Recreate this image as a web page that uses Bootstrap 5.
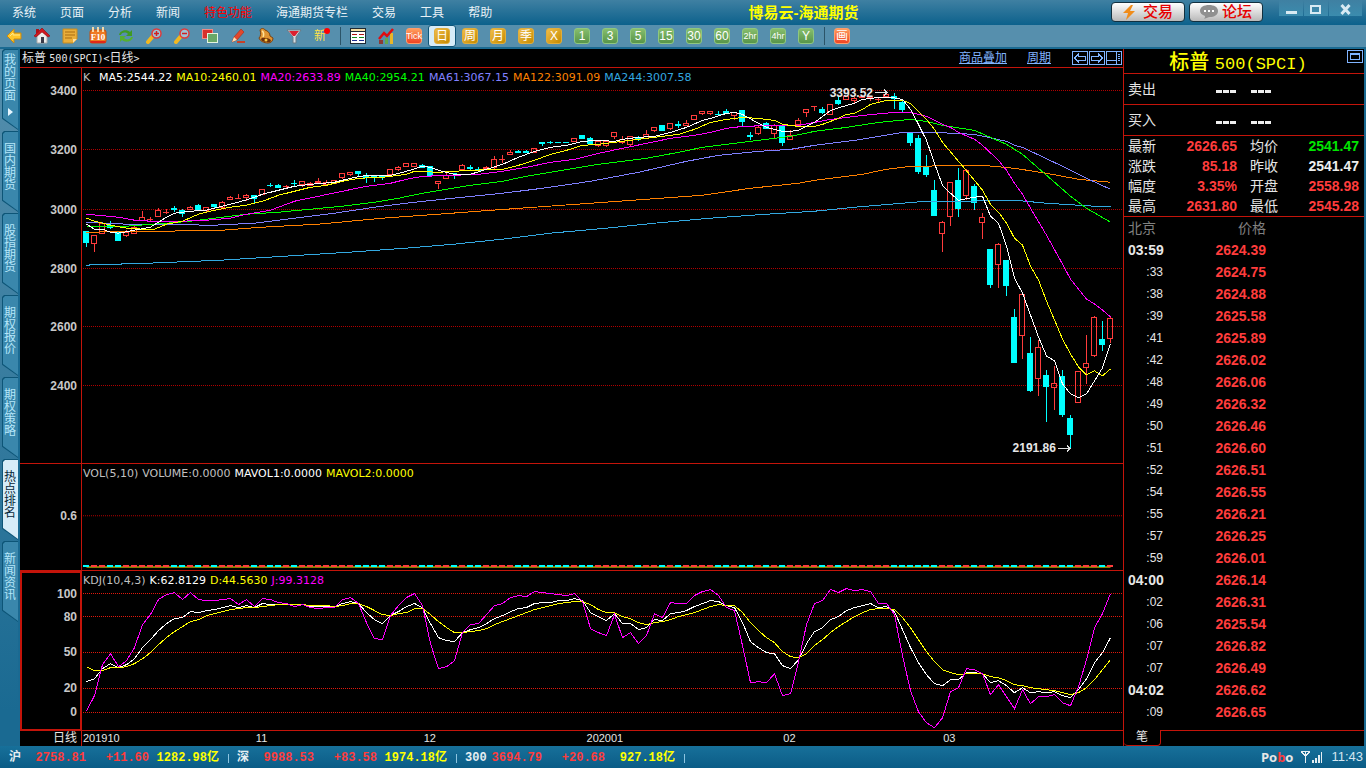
<!DOCTYPE html>
<html lang="zh-CN" data-bs-theme="dark">
<head>
<meta charset="utf-8">
<meta name="viewport" content="width=device-width, initial-scale=1">
<title>博易云-海通期货</title>
<link rel="stylesheet" href="https://cdn.jsdelivr.net/npm/bootstrap@5.3.0/dist/css/bootstrap.min.css">
<style>
:root{--rule:#c4140a;--frame:#1a6a92;--up:#ff3c3c;--down:#00ffff;--ink:#e6e6e6}
body{font-family:"Liberation Sans","Noto Sans CJK SC",sans-serif;font-size:12px;line-height:16px;color:var(--ink);background:#000}
button{border:0;padding:0;background:none;color:inherit;font:inherit}
.app-head{height:25px;background:linear-gradient(#3f80a2,#0c618c)}
.menu-link{padding:0 12px;line-height:26px;color:#e8f1f6;text-decoration:none;white-space:nowrap}
.menu-link.hot{color:#f00}
.app-title{font-size:15px;line-height:25px;color:#ff0;font-weight:700;margin:0;padding-right:8px}
.head-btn{width:74px;height:20px;border:1px solid #12303f;border-radius:4px;background:linear-gradient(#fff,#b9b9b9);color:#e60000;font-size:15px;line-height:18px;font-weight:500}
.win-btn{width:24px;height:16px;background:linear-gradient(#3f80a2,#3b8cae);color:#d8eaf3}
.win-btn.wide{width:33px}
.tool-bar{height:22px;background:#568fad}
.tool{width:28px;height:22px;display:flex;align-items:center;justify-content:center}
.tool.on{background:#d6ecf8;border:1px solid #0f5578;border-radius:3px}
.tool-gap{width:8px;display:flex;justify-content:center;align-items:center}
.tool-gap::before{content:"";width:1px;height:18px;background:#2b5468}
.chip{width:16px;height:16px;border-radius:3px;display:flex;align-items:center;justify-content:center;color:#fff;font-size:12px;line-height:16px;border:1px solid #e0ad3c;background:linear-gradient(135deg,#f0bd48,#c58a00)}
.chip.green{border-color:#8fc77f;background:linear-gradient(#86bd6c,#57954a)}
.chip.red{border-color:#ff9c6a;background:linear-gradient(#ff9d5c,#ee4424)}
.chip.slim{font-size:9px}
.chip.cjk{font-size:12px}
.work{border-top:2px solid var(--frame);border-right:2px solid var(--frame);flex:1 1 auto;min-height:0}
.side{width:20px;padding-left:2px;background:linear-gradient(#568fad,#1a6a92 95%);border-right:2px solid var(--frame)}
.side-tab{--cut:polygon(2px 0,100% 0,100% 100%,0 86%,0 2px);position:relative;width:16px;height:81px;margin-bottom:1px;background:#0d5577;clip-path:var(--cut);display:flex;flex-direction:column;align-items:center;justify-content:center;gap:6px;padding-bottom:10px;color:#b5e6fa;isolation:isolate}
.side-tab::before{content:"";position:absolute;inset:1px 0 1px 1px;background:#3a87ac;clip-path:var(--cut);z-index:-1}
.side-tab.on{color:#06283a}
.side-tab.on::before{background:#d6ecf8}
.side-tab span{width:12px;line-height:12px;word-break:break-all}
.chart-head{height:19px;border-bottom:1px solid var(--rule);padding:0 1px 0 2px}
.chart-head a{color:#80b4ff;margin-right:20px;line-height:18px}
.mono-s{font-family:"DejaVu Sans Mono",monospace;font-size:10px}
.nav-box{color:#80b4ff;width:16px;height:15px;margin-left:1px;display:flex}
.chart-col{border-right:1px solid var(--rule)}
.pane{display:flex;min-height:0;border-bottom:1px solid var(--rule)}
.pane-price{flex:397 1 0}
.pane-vol{flex:106 1 0}
.pane-kdj{flex:160 1 0}
.axis{position:relative;width:62px;border-right:1px solid var(--rule);flex:none}
.pane-kdj .axis{border:2px solid var(--rule);border-bottom-width:1px}
.axis span{position:absolute;right:4px;transform:translateY(-50%);font-weight:700;font-size:12px;color:#c8c8c8}
.pane-kdj .axis span{right:3px}
.plot{position:relative;min-width:0;flex:1}
.plot svg.draw{position:absolute;inset:0;width:100%;height:100%;display:block}
.draw *{vector-effect:non-scaling-stroke;shape-rendering:crispEdges}
.legend-row{position:relative;z-index:1;display:flex;gap:4px;padding:2px 0 0 1px;font-family:"DejaVu Sans",sans-serif;font-size:11px;line-height:16px;white-space:nowrap;color:#c0c0c0}
.legend-row .first-k{width:12px}
.mark-tag{position:absolute;display:flex;align-items:center;gap:2px;font-weight:700;transform:translateY(-50%);line-height:14px;color:#e6e6e6}
.dates{height:15px;display:flex;line-height:15px}
.dates .unit{width:62px;flex:none;text-align:right;padding-right:4px;border-right:1px solid var(--rule)}
.date-track{display:grid;flex:1;grid-template-columns:173fr 168fr 163fr 197fr 160fr 180fr;font-size:11px;padding-left:1px}
.quote{width:240px;flex:none}
.quote-head{height:25px;border-bottom:1px solid var(--rule);position:relative}
.quote-head h2{color:#ff0;font-size:20px;line-height:26px;margin:0;font-weight:500;padding-right:12px}
.quote-head h2 span{font-family:"Liberation Mono",monospace;font-size:17px;font-weight:400}
.quote-head button{position:absolute;top:1px;right:1px;color:#80b4ff;display:flex}
.side-row{height:31px;border-bottom:1px solid var(--rule);font-size:14px;padding-left:4px}
.side-row b{display:flex;gap:15px;padding-left:60px}
.dash3{display:flex;gap:1px;font-size:16px}
.dash3 i{width:6px;height:3px;background:#eee;margin-top:5px}
.facts{height:81px;border-bottom:1px solid var(--rule);display:grid;grid-template-columns:34px 75px 34px 88px;column-gap:0;grid-auto-rows:20px;line-height:20px;font-size:14px;padding:0 4px;margin:0}
.facts dt{font-weight:400}
.facts dt:nth-of-type(even){padding-left:13px;width:48px}
.facts dd{margin:0;text-align:right;font-weight:700}
.up{color:var(--up)}.even{color:#eee}.low{color:#00e600}
.ticks{width:142px;font-size:14px;line-height:22px;border-collapse:collapse}
.ticks th,.ticks td{padding:0;height:22px}
.ticks thead th{color:#808080;font-weight:400}
.ticks th:first-child{padding-left:4px;text-align:left;width:42px}
.ticks td,.ticks th:last-child{text-align:right}
.ticks tbody th.sec{font-weight:400;font-size:12px;text-align:right;padding-right:3px}
.ticks td{color:var(--up);font-weight:700}
.foot-tabs{height:16px}
.foot-tabs button{width:37px;border:1px solid var(--rule);border-width:0 1px 1px 0;border-radius:0 0 4px 4px;font-size:12px;line-height:15px}
.foot-tabs div{border-top:1px solid var(--rule)}
.status{height:22px;background:linear-gradient(#17709a,#0b5c86);line-height:24px;padding-left:9px;padding-right:3px}
.idx{display:grid;grid-template-columns:26px 51px 63px 70px 18px;font-family:"Liberation Mono","Noto Sans CJK SC",monospace;font-weight:700;text-align:right;white-space:nowrap}
.idx :first-child{text-align:left;color:#e6eef2}
.idx em{font-style:normal;color:#ff0}
.idx u{text-decoration:none;display:flex;justify-content:center;align-items:center}
.idx u::before{content:"";width:1px;height:9px;background:#8cc4e0}
.brand{font-family:"Open Sans",sans-serif;font-size:13px;font-weight:700}
.clock{font-size:13px;color:#d4e6f0}
</style>
</head>
<body>
<div class="d-flex flex-column vh-100 overflow-hidden">
<header class="app-head d-flex">
  <nav class="d-flex">
    <a class="menu-link" href="#">系统</a><a class="menu-link" href="#">页面</a><a class="menu-link" href="#">分析</a><a class="menu-link" href="#">新闻</a><a class="menu-link hot" href="#">特色功能</a><a class="menu-link" href="#">海通期货专栏</a><a class="menu-link" href="#">交易</a><a class="menu-link" href="#">工具</a><a class="menu-link" href="#">帮助</a>
  </nav>
  <h1 class="app-title flex-grow-1 text-center">博易云-海通期货</h1>
  <div class="d-flex gap-1 align-items-start" style="padding-top:2px">
    <button class="head-btn d-flex align-items-center justify-content-center gap-2"><svg width="12" height="15" viewBox="0 0 12 15"><path d="M8 0 0 8h5l-2 7 9-9H7l3-6z" fill="#f08c1a"/></svg>交易</button>
    <button class="head-btn d-flex align-items-center justify-content-center gap-1"><svg width="18" height="14" viewBox="0 0 18 14"><path d="M9 0c5 0 9 2 9 6s-4 6-8 6c-2 0-3 1-6 2 1-1 1-2 1-3C2 10 0 8 0 6c0-4 4-6 9-6z" fill="#909090"/><path d="M4 5h2v2H4zM8 5h2v2H8zM12 5h2v2h-2z" fill="#fff"/></svg>论坛</button>
  </div>
  <div class="d-flex ms-3 pe-1 align-items-start" style="gap:1px">
    <button class="win-btn" aria-label="最小化"><svg width="11" height="14"><path d="M0 9h11v3H0z" fill="currentColor"/></svg></button>
    <button class="win-btn" aria-label="最大化"><svg width="12" height="14"><path d="M1 4h9v7H1z" fill="none" stroke="currentColor" stroke-width="2"/></svg></button>
    <button class="win-btn wide" aria-label="关闭"><svg width="12" height="14"><path d="M1.500 3 9.500 12M9.500 3 1.500 12" fill="none" stroke="currentColor" stroke-width="3"/></svg></button>
  </div>
</header>

<div class="tool-bar d-flex" role="toolbar">
  <button class="tool" aria-label="后退"><svg width="16" height="16"><path d="M1 8l7-7v4h7v6H8v4z" fill="#ffc62a" stroke="#c98a10"/><path d="M4 8l3-3v2h7" fill="none" stroke="#ffe88a"/></svg></button>
  <button class="tool" aria-label="主页"><svg width="16" height="16"><path d="M3 8v7h10V8L8 3z" fill="#eee" stroke="#aaa"/><path d="M0 8 8 0l8 8-2 1-6-5-6 5z" fill="#d01820" stroke="#8c0c12" stroke-width=".6"/><path d="M2 1h3v3L2 6z" fill="#b01018"/><path d="M7 9h3v6H7z" fill="#3a3a48"/></svg></button>
  <button class="tool" aria-label="便笺"><svg width="16" height="16"><path d="M1 1h14v10l-4 4H1z" fill="#eaae3a" stroke="#c58a20"/><path d="M3 4h10M3 7h10M3 10h7" stroke="#a96c10"/><path d="M15 11h-4v4z" fill="#ffe0a0"/></svg></button>
  <button class="tool" aria-label="F10"><svg width="18" height="18"><rect x="1" y="3" width="16" height="13" rx="2" fill="#ef7a22" stroke="#c4500e"/><path d="M4 0v5M9 0v5M14 0v5" stroke="#f6d9a8" stroke-width="2"/><path d="M1.500 15h15" stroke="#e02818" stroke-width="2"/><text x="9" y="13" text-anchor="middle" font-family="Liberation Serif" font-weight="700" font-size="9" fill="#fff">F10</text></svg></button>
  <button class="tool" aria-label="刷新"><svg width="16" height="16"><path d="M1 7c1-5 8-6 11-3l2-2v6H8l2-2C8 4 4 4 3 7z" fill="#3f9a22"/><path d="M15 9c-1 5-8 6-11 3l-2 2V8h6l-2 2c2 2 6 2 7-1z" fill="#55b030"/></svg></button>
  <button class="tool" aria-label="放大"><svg width="16" height="16"><path d="M7 8 2 14" stroke="#f2b820" stroke-width="4" stroke-linecap="round"/><circle cx="10.500" cy="5.500" r="4.500" fill="#9fc2d4" stroke="#e03a3a" stroke-width="1.500"/><path d="M8 5.500h5M10.500 3v5" stroke="#d02020" stroke-width="1.500"/></svg></button>
  <button class="tool" aria-label="缩小"><svg width="16" height="16"><path d="M7 8 2 14" stroke="#f2b820" stroke-width="4" stroke-linecap="round"/><circle cx="10.500" cy="5.500" r="4.500" fill="#9fc2d4" stroke="#e03a3a" stroke-width="1.500"/><path d="M8 5.500h5" stroke="#d02020" stroke-width="1.500"/></svg></button>
  <button class="tool" aria-label="叠加"><svg width="16" height="16"><rect x=".5" y="1.500" width="10" height="9" fill="#d8302c" stroke="#f08a84"/><rect x="5.500" y="5.500" width="10" height="9" fill="#6aa868" stroke="#e4f4e0"/></svg></button>
  <button class="tool" aria-label="画笔"><svg width="16" height="16"><path d="M2 14 4 9l7-8 3 3-7 8z" fill="#e2482c" stroke="#a82c18" stroke-width=".6"/><path d="M2 14l2-5 3 3z" fill="#ffe0b0"/><path d="M7 14h8" stroke="#c84028" stroke-width="2"/></svg></button>
  <button class="tool" aria-label="预警"><svg width="16" height="16"><path d="M2 2c1-2 4-2 5 0 3 1 5 3 5 6l3 2c0 3-2 5-5 5-4 0-8-2-9-5 2-2 2-5 1-8z" fill="#e09432" stroke="#7c4210"/><ellipse cx="8" cy="12" rx="5" ry="2" fill="#6e3108" transform="rotate(12 8 12)"/><circle cx="8" cy="12" r="1.500" fill="#ffce4a"/><path d="M4 3c2 1 2 4 1 6" stroke="#ffe29a" stroke-width="1.500" fill="none"/></svg></button>
  <button class="tool" aria-label="筛选"><svg width="16" height="16"><path d="M1 2h14L10 9v6H7V9z" fill="#d4dde2" stroke="#6a7a84"/><path d="M3 3h10l-4 5H7z" fill="#dc2030"/></svg></button>
  <button class="tool" aria-label="新功能"><svg width="18" height="18"><text x="1" y="13" font-family="Noto Sans CJK SC" font-size="12" fill="#ffe24a">新</text><circle cx="14" cy="4" r="3" fill="#f00"/></svg></button>
  <span class="tool-gap"></span>
  <button class="tool" aria-label="报价表"><svg width="16" height="16" shape-rendering="crispEdges"><path d="M0 0h16v16H0z" fill="#1e2a34"/><path d="M1 4h14v11H1z" fill="#fff"/><path d="M1 1h14v2H1z" fill="#f5dca0"/><path d="M2 6h5v1H2zM9 6h5v1H9z" fill="#b01010"/><path d="M2 9h5v1H2zM9 9h5v1H9z" fill="#10891c"/><path d="M2 12h5v1H2zM9 12h5v1H9z" fill="#1c2c90"/></svg></button>
  <button class="tool" aria-label="走势图"><svg width="16" height="16"><path d="M1 12h4v4H1zM12 5h3v11h-3z" fill="#e8b62a"/><path d="M1 12h4v4H1z" fill="#8c3a34"/><path d="M7 10h3v6H7z" fill="#62a84c"/><path d="M1 11 6 5l3 3 6-7" fill="none" stroke="#e00c10" stroke-width="2.500"/></svg></button>
  <button class="tool"><span class="chip red slim">Tick</span></button>
  <button class="tool on"><span class="chip cjk">日</span></button>
  <button class="tool"><span class="chip cjk">周</span></button>
  <button class="tool"><span class="chip cjk">月</span></button>
  <button class="tool"><span class="chip cjk">季</span></button>
  <button class="tool"><span class="chip">X</span></button>
  <button class="tool"><span class="chip green">1</span></button>
  <button class="tool"><span class="chip green">3</span></button>
  <button class="tool"><span class="chip green">5</span></button>
  <button class="tool"><span class="chip green">15</span></button>
  <button class="tool"><span class="chip green">30</span></button>
  <button class="tool"><span class="chip green">60</span></button>
  <button class="tool"><span class="chip green slim">2hr</span></button>
  <button class="tool"><span class="chip green slim">4hr</span></button>
  <button class="tool"><span class="chip green">Y</span></button>
  <span class="tool-gap"></span>
  <button class="tool"><span class="chip red cjk">画</span></button>
</div>

<main class="work d-flex">
  <div class="side">
    <button class="side-tab"><span>我的页面</span><svg width="5" height="8"><path d="M0 0l5 4-5 4z" fill="#e6f6ff"/></svg></button>
    <button class="side-tab"><span>国内期货</span></button>
    <button class="side-tab"><span>股指期货</span></button>
    <button class="side-tab"><span>期权报价</span></button>
    <button class="side-tab"><span>期权策略</span></button>
    <button class="side-tab on"><span>热点排名</span></button>
    <button class="side-tab"><span>新闻资讯</span></button>
  </div>

  <section class="chart-col d-flex flex-column flex-grow-1">
    <div class="chart-head d-flex align-items-center">
      <span class="me-auto">标普 <span class="mono-s">500(SPCI)&lt;</span>日线<span class="mono-s">&gt;</span></span>
      <a href="#">商品叠加</a><a href="#">周期</a>
      <button class="nav-box" aria-label="上一个"><svg width="16" height="15" fill="none" stroke="currentColor" shape-rendering="crispEdges"><path d="M.5.500h15v13H.5z"/><path d="M2.500 7l4-4v2h7v4h-7v2z"/></svg></button>
      <button class="nav-box" aria-label="下一个"><svg width="16" height="15" fill="none" stroke="currentColor" shape-rendering="crispEdges"><path d="M.5.500h15v13H.5z"/><path d="M13.500 7l-4-4v2h-7v4h7v2z"/></svg></button>
      <button class="nav-box" aria-label="布局"><svg width="16" height="15" fill="none" stroke="currentColor" shape-rendering="crispEdges"><path d="M.5.500h15v13H.5zM10.500 0v14M0 9.500h10M12 3.500h2M12 5.500h2M12 7.500h2M12 9.500h2"/></svg></button>
    </div>
    <div class="pane pane-price">
      <div class="axis" id="axPrice"></div>
      <div class="plot">
        <svg class="draw" id="plPrice" viewBox="82 68 1041 396" preserveAspectRatio="none"></svg>
        <div class="legend-row"><span class="first-k">K</span><span style="color:#fff">MA5:2544.22</span><span style="color:#ff0">MA10:2460.01</span><span style="color:#f0f">MA20:2633.89</span><span style="color:#0f0">MA40:2954.21</span><span style="color:#8080ff">MA61:3067.15</span><span style="color:#ff8000">MA122:3091.09</span><span style="color:#33a8e0">MA244:3007.58</span></div>
      </div>
    </div>
    <div class="pane pane-vol">
      <div class="axis" id="axVol"></div>
      <div class="plot">
        <svg class="draw" id="plVol" viewBox="82 465 1041 105" preserveAspectRatio="none"></svg>
        <div class="legend-row"><span>VOL(5,10)</span><span>VOLUME:0.0000</span><span style="color:#fff">MAVOL1:0.0000</span><span style="color:#ff0">MAVOL2:0.0000</span></div>
      </div>
    </div>
    <div class="pane pane-kdj">
      <div class="axis" id="axKdj"></div>
      <div class="plot">
        <svg class="draw" id="plKdj" viewBox="82 571 1041 159" preserveAspectRatio="none"></svg>
        <div class="legend-row"><span>KDJ(10,4,3)</span><span style="color:#fff">K:62.8129</span><span style="color:#ff0">D:44.5630</span><span style="color:#f0f">J:99.3128</span></div>
      </div>
    </div>
    <div class="dates"><span class="unit">日线</span><div class="date-track"><span>201910</span><span>11</span><span>12</span><span>202001</span><span>02</span><span>03</span></div></div>
  </section>

  <aside class="quote d-flex flex-column">
    <div class="quote-head text-center"><h2>标普 <span>500(SPCI)</span></h2><button aria-label="展开"><svg width="16" height="14" fill="none" stroke="currentColor" shape-rendering="crispEdges"><path d="M.5.500h15v12H.5zM3.500 3.500h9v6h-9zM3 4.500h9"/></svg></button></div>
    <div class="side-row d-flex align-items-center">卖出<b><span class="dash3"><i></i><i></i><i></i></span><span class="dash3"><i></i><i></i><i></i></span></b></div>
    <div class="side-row d-flex align-items-center">买入<b><span class="dash3"><i></i><i></i><i></i></span><span class="dash3"><i></i><i></i><i></i></span></b></div>
    <dl class="facts">
      <dt>最新</dt><dd class="up">2626.65</dd><dt>均价</dt><dd class="low">2541.47</dd>
      <dt>涨跌</dt><dd class="up">85.18</dd><dt>昨收</dt><dd class="even">2541.47</dd>
      <dt>幅度</dt><dd class="up">3.35%</dd><dt>开盘</dt><dd class="up">2558.98</dd>
      <dt>最高</dt><dd class="up">2631.80</dd><dt>最低</dt><dd class="up">2545.28</dd>
    </dl>
    <div class="flex-grow-1 overflow-hidden" style="min-height:0">
      <table class="ticks"><thead><tr><th>北京</th><th>价格</th></tr></thead><tbody id="ticks"></tbody></table>
    </div>
    <div class="foot-tabs d-flex"><button>笔</button><div class="flex-grow-1"></div></div>
  </aside>
</main>

<footer class="status d-flex">
  <div class="idx"><span>沪</span><span class="up">2758.81</span><span class="up">+11.60</span><em>1282.98亿</em><u></u></div>
  <div class="idx"><span>深</span><span class="up">9988.53</span><span class="up">+83.58</span><em>1974.18亿</em><u></u></div>
  <div class="idx"><span>300</span><span class="up">3694.79</span><span class="up">+20.68</span><em>927.18亿</em><u></u></div>
  <div class="ms-auto d-flex align-items-center gap-2">
    <span class="brand">Po<span class="up">b</span>o</span>
    <svg width="22" height="14" fill="none" stroke="#e6eef2" shape-rendering="crispEdges"><path d="M0 1.500h9M1 2l3.500 4L8 2M4.500 2v11" stroke-width="1.500"/><path d="M11 10h2v3h-2zM14 8h2v5h-2zM17 5h2v8h-2zM20 2h1v11h-1z" fill="#e6eef2" stroke="none"/></svg>
    <span class="clock">11:43</span>
  </div>
</footer>
</div>

<script src="https://cdn.jsdelivr.net/npm/bootstrap@5.3.0/dist/js/bootstrap.bundle.min.js"></script>
<script>
// Each candle: direction (r rising, c falling), high, body top, body bottom, low.
const candles = `c231,231,243,247 r235,235,244,252 r222,223,234,234 c221,225,228,229 c232,232,241,241 r230,232,236,237 r225,227,234,234 r211,217,221,221 r217,219,220,222 r208,210,217,217 r209,212,213,214 c206,208,210,212 c209,210,214,217 r206,207,210,210 c204,205,211,211 r207,207,211,212 c204,204,207,209 r201,202,208,209 r196,197,200,200 r194,198,199,199 r194,195,198,201 c195,195,199,203 r189,189,195,195 c183,185,186,187 c184,185,188,188 r185,186,187,189 c180,183,184,186 r181,181,185,187 r182,183,186,186 r178,181,183,184 r180,182,185,186 r180,180,184,184 r173,173,178,179 r172,172,175,176 c171,171,174,176 c173,175,178,183 c175,175,178,182 c175,175,177,180 r169,169,175,175 r166,167,170,171 r163,163,167,167 r163,163,167,167 c164,165,168,168 c166,166,176,176 r181,181,184,189 r173,175,179,179 c173,173,174,179 r164,165,170,170 c165,167,169,170 c167,169,171,172 r166,167,169,170 r156,159,168,169 r155,159,160,163 r150,152,155,155 c150,151,153,153 c150,151,153,153 r148,148,153,153 c142,142,144,146 c141,142,143,144 c142,142,143,143 c142,142,143,143 r138,138,142,142 c135,135,139,139 c137,138,144,144 r140,141,146,147 r140,141,146,147 r132,132,137,139 r136,139,143,144 r136,136,145,146 c136,137,139,141 r130,134,139,139 r127,127,131,132 c125,125,131,131 r123,123,129,130 c121,124,126,128 r120,123,126,126 r115,115,120,120 r111,111,114,115 r111,111,114,115 c111,114,115,116 c109,111,114,114 r112,112,116,120 c110,110,122,126 c132,135,137,140 r125,127,134,135 c122,123,129,129 r124,125,134,138 c125,126,143,146 r130,135,140,140 r118,120,125,126 r109,109,113,117 r106,106,107,111 c107,109,113,114 r104,104,115,115 c97,100,104,105 r96,96,100,100 r97,98,101,103 r96,96,98,98 r96,96,98,101 r98,99,100,103 r92,94,97,97 c93,96,99,109 c100,102,110,112 c132,132,143,146 c135,138,172,174 c155,167,175,177 c180,190,216,216 r221,222,234,252 r182,182,217,226 c168,180,209,217 r169,170,196,200 c184,186,203,210 r213,217,223,239 c249,249,285,288 r243,244,265,288 c260,260,286,296 c309,318,364,364 r294,294,337,360 c338,354,392,393 r341,348,380,397 c371,376,388,423 r367,384,389,411 c371,377,416,418 c416,419,436,449 r372,372,404,404 r336,364,369,385 r316,318,357,358 c322,340,346,352 r317,319,340,344`.split(' ').map(s => [s[0], ...s.slice(1).split(',').map(Number)]);

const averages = [
 ['#33a8e0','86,265 150,263 222,260 286,256 350,252 406,248 454,244 502,239 550,233 606,228 654,223 710,218 766,214 814,211 854,207 878,205 926,201 966,201 1014,200 1046,203 1094,206 1110,206'],
 ['#ff8000','86,232 166,231 222,230 262,227 318,224 382,218 438,214 478,211 534,207 590,203 646,199 702,195 750,188 798,183 814,180 862,174 886,169 910,166 982,165 1014,168 1046,173 1078,179 1110,182'],
 ['#8080ff','86,222 126,224 214,225 254,223 286,219 334,213 374,207 414,202 462,197 502,193 542,188 590,181 638,172 686,161 718,155 758,151 790,149 814,145 854,140 878,136 902,132 934,132 974,134 1006,141 1014,145 1022,147 1062,166 1086,178 1110,189'],
 ['#0f0','86,226 126,226 166,223 190,221 222,217 246,214 278,212 310,209 342,206 374,202 398,198 422,193 446,189 470,185 502,181 526,176 550,172 598,164 646,158 678,152 702,147 734,143 758,140 790,136 814,131 846,127 878,122 910,119 926,121 942,125 974,130 990,137 1006,144 1022,154 1046,175 1070,196 1086,208 1110,222'],
 ['#f0f','86,214 118,217 134,220 150,221 182,221 206,220 230,218 246,214 270,210 294,201 318,196 342,191 366,186 390,183 406,179 422,176 454,175 478,174 502,171 526,167 550,162 574,159 598,153 622,148 646,143 670,138 694,135 710,132 726,128 742,126 774,125 798,125 830,119 862,115 894,112 910,112 926,116 942,124 950,127 958,132 974,139 982,145 998,160 1006,170 1014,183 1022,194 1030,208 1046,235 1062,264 1070,279 1086,299 1094,304 1102,310 1110,317'],
 ['#ff0','86,218 94,221 110,225 126,228 142,229 154,229 166,224 182,221 198,214 214,210 230,207 246,205 262,201 278,195 294,191 310,187 326,185 342,181 358,178 382,177 406,174 414,171 438,172 454,171 470,170 502,169 518,165 534,160 550,154 566,150 582,145 598,144 614,142 638,139 662,136 678,134 694,129 710,122 726,119 742,117 758,118 774,120 782,124 798,126 814,126 822,124 830,121 838,118 846,114 854,113 862,109 870,104 886,100 902,100 910,103 926,119 934,129 942,142 958,161 974,180 982,190 990,204 998,212 1006,223 1014,238 1022,245 1030,266 1038,280 1046,301 1054,320 1062,339 1070,354 1078,367 1086,375 1094,371 1102,376 1110,369'],
 ['#fff','86,224 94,229 102,229 110,232 118,233 134,230 150,227 158,222 166,217 174,213 190,211 206,210 222,206 238,202 254,197 262,194 278,190 294,186 310,184 334,182 350,178 366,175 390,175 406,171 422,166 430,167 438,170 446,172 454,174 470,174 486,169 502,164 518,157 534,151 550,147 566,145 582,141 598,140 614,141 622,139 638,137 654,136 670,132 686,127 702,120 710,118 726,113 734,112 742,114 758,123 766,127 774,129 782,131 790,131 798,130 806,126 814,122 822,116 830,110 846,105 854,103 862,99 878,97 892,97 902,99 910,109 918,124 926,140 934,163 942,185 950,193 958,200 974,197 982,196 990,216 998,223 1006,246 1014,278 1022,293 1030,315 1038,337 1046,356 1054,361 1062,384 1070,394 1078,398 1086,394 1094,381 1102,368 1110,344']
];

const kdj = {
 '#fff':[681,678,668,663,667,664,658,647,639,630,623,618,617,611,612,610,609,607,605,607,605,607,603,604,604,604,604,604,606,606,606,606,603,601,603,612,619,623,615,611,606,603,607,623,637,640,641,632,629,627,623,618,615,611,608,607,603,602,602,600,600,598,600,612,616,620,613,623,623,629,627,619,620,613,612,610,606,603,600,601,605,607,622,641,647,652,653,665,668,659,643,631,627,619,616,610,607,605,603,607,606,611,629,647,662,674,683,685,679,679,672,672,673,682,680,685,692,687,692,691,692,691,695,697,689,678,662,652,637],
 '#ff0':[666,670,670,667,667,666,663,658,652,644,637,631,626,621,619,615,613,611,609,608,607,607,606,605,604,604,604,604,605,605,605,606,605,603,603,606,610,614,615,613,612,608,608,614,621,627,632,632,631,630,628,624,621,618,615,612,609,607,605,603,602,601,601,604,609,612,612,616,618,622,624,622,621,619,616,614,612,609,606,604,605,605,612,622,630,637,642,651,656,657,653,645,639,632,626,621,616,612,609,608,608,609,617,627,639,651,661,669,672,674,673,673,673,676,677,680,684,685,687,688,689,690,692,694,692,687,679,669,659],
 '#f0f':[710,695,664,653,666,660,647,624,614,599,594,592,599,592,599,600,600,599,598,604,599,606,598,599,602,603,606,604,607,608,607,607,599,597,603,622,638,639,615,605,597,593,605,643,668,666,660,632,624,623,614,605,603,597,595,596,591,592,593,594,595,593,601,628,632,635,614,637,632,643,635,613,617,602,603,603,595,591,589,595,607,610,645,682,681,682,673,695,693,661,624,603,600,589,592,588,590,589,591,603,603,614,655,690,711,722,727,717,691,687,668,669,673,694,684,696,708,689,703,696,696,694,702,705,686,659,627,613,593]
};

const xAt = i => 86 + 8 * i;
const line = (pts, c) => `<polyline points="${pts}" transform="translate(.5 .5)" fill="none" stroke="${c}"/>`;
const grid = (ys, c) => ys.map(y => `<path d="M83 ${y + .5}H1123" stroke="${c}" stroke-dasharray="1 1"/>`).join('');

function labels(id, rows, top, span) {
  document.getElementById(id).innerHTML = rows.map(([t, y]) => `<span style="top:${((y - top) / span * 100).toFixed(2)}%">${t}</span>`).join('');
}

let out = grid([90,149,209,268,327,386], '#b00000');
candles.forEach(([d, hi, t, b, lo], i) => {
  const x = xAt(i);
  if (d === 'c') out += `<path d="M${x} ${hi}h1V${lo}h-1zM${x - 3} ${t}h6V${b}h-6z" fill="#0ff"/>`;
  else out += `<path d="M${x} ${hi}h1V${t}h-1zM${x} ${b}h1V${lo}h-1z" fill="#ff3c3c"/>` +
    (b - t < 3 ? `<path d="M${x - 3} ${t}h6V${b}h-6z" fill="#ff3c3c"/>` : `<path d="M${x - 2.5} ${t + .5}h5V${b - .5}h-5z" fill="none" stroke="#ff3c3c"/>`);
});
document.getElementById('plPrice').innerHTML = out + averages.map(([c, p]) => line(p, c)).join('');

document.getElementById('plVol').innerHTML = grid([516], '#b00000') +
  line('86,567 1110,567', '#ff0') + candles.map(([d], i) => `<path d="M${xAt(i) - 3} 566h6v1h-6z" fill="${d === 'c' ? '#0ff' : '#ff3c3c'}"/>`).join('');

document.getElementById('plKdj').innerHTML = grid([593,616,652,688,712], '#e0180c') +
  Object.entries(kdj).map(([c, v]) => line(v.map((y, i) => xAt(i) + ',' + y).join(' '), c)).join('');

labels('axPrice', [[3400,91],[3200,150],[3000,210],[2800,269],[2600,328],[2400,387]], 68, 396);
labels('axVol', [['0.6',517]], 465, 105);
labels('axKdj', [[100,594],[80,617],[50,653],[20,689],[0,713]], 573, 157);

const arrow = '<svg width="13" height="7" fill="none" stroke="#ddd" shape-rendering="crispEdges"><path d="M0 3.500h12M9 .500l3 3-3 3"/></svg>';
for (const [t, x, y] of [['3393.52', 888, 93], ['2191.86', 1071, 449]])
  document.getElementById('plPrice').insertAdjacentHTML('afterend', `<span class="mark-tag" style="right:${((1123 - x) / 1041 * 100).toFixed(2)}%;top:${((y - 68) / 396 * 100).toFixed(2)}%">${t}${arrow}</span>`);

const ticks = '03:59 2624.39,:33 2624.75,:38 2624.88,:39 2625.58,:41 2625.89,:42 2626.02,:48 2626.06,:49 2626.32,:50 2626.46,:51 2626.60,:52 2626.51,:54 2626.55,:55 2626.21,:57 2626.25,:59 2626.01,04:00 2626.14,:02 2626.31,:06 2625.54,:07 2626.82,:07 2626.49,04:02 2626.62,:09 2626.65';
document.getElementById('ticks').innerHTML = ticks.split(',').map(r => {
  const [t, p] = r.split(' ');
  return `<tr><th${t[0] === ':' ? ' class="sec"' : ''}>${t}</th><td>${p}</td></tr>`;
}).join('');
</script>
</body>
</html>
